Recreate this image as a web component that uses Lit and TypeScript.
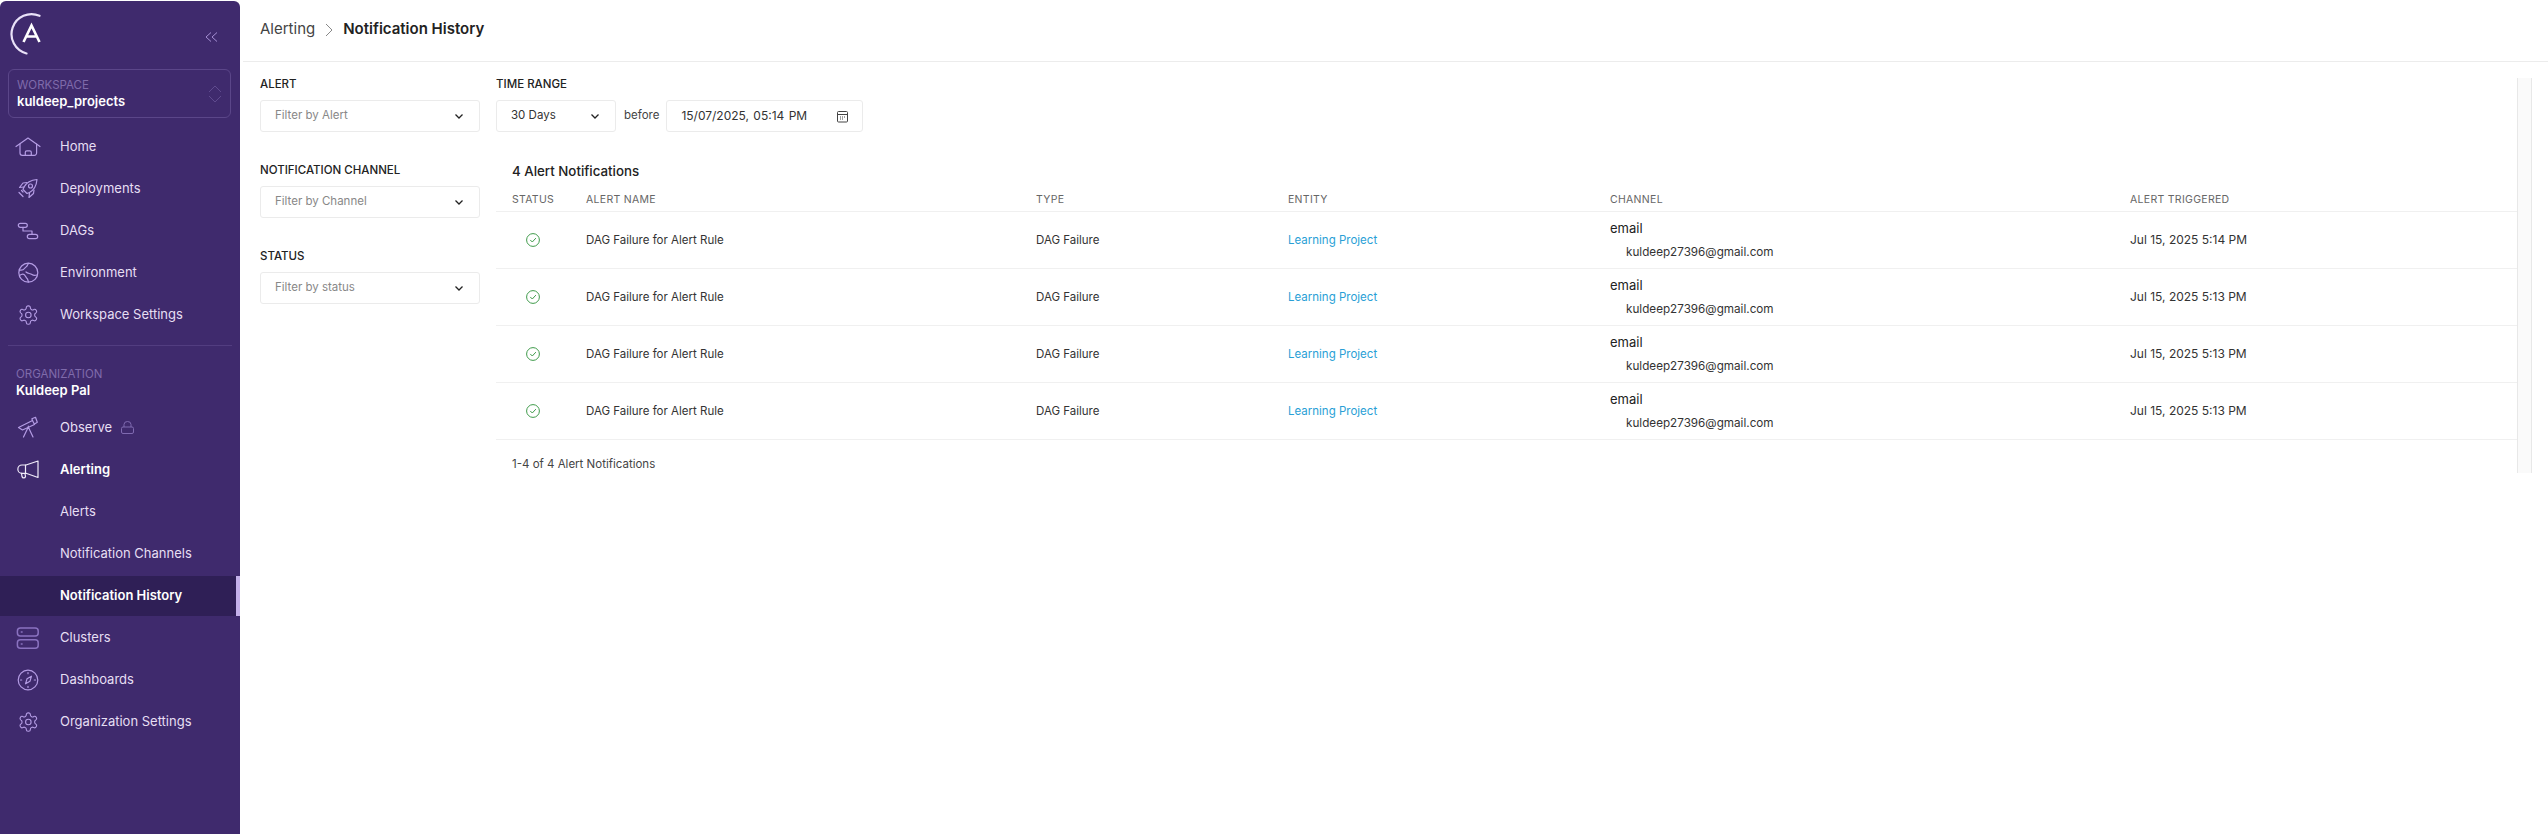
import { LitElement, css, html, svg } from "lit";
import { customElement } from "lit/decorators.js";

const GEAR = svg`
  <g transform="translate(3.3 4) scale(.92)">
    <path d="M12.22 2h-.44a2 2 0 0 0-2 2v.18a2 2 0 0 1-1 1.73l-.43.25a2 2 0 0 1-2 0l-.15-.08a2 2 0 0 0-2.73.73l-.22.38a2 2 0 0 0 .73 2.73l.15.1a2 2 0 0 1 1 1.72v.51a2 2 0 0 1-1 1.74l-.15.09a2 2 0 0 0-.73 2.73l.22.38a2 2 0 0 0 2.73.73l.15-.08a2 2 0 0 1 2 0l.43.25a2 2 0 0 1 1 1.73V20a2 2 0 0 0 2 2h.44a2 2 0 0 0 2-2v-.18a2 2 0 0 1 1-1.73l.43-.25a2 2 0 0 1 2 0l.15.08a2 2 0 0 0 2.73-.73l.22-.39a2 2 0 0 0-.73-2.73l-.15-.08a2 2 0 0 1-1-1.74v-.5a2 2 0 0 1 1-1.74l.15-.09a2 2 0 0 0 .73-2.73l-.22-.38a2 2 0 0 0-2.73-.73l-.15.08a2 2 0 0 1-2 0l-.43-.25a2 2 0 0 1-1-1.73V4a2 2 0 0 0-2-2z"/>
    <circle cx="12" cy="12" r="3"/>
  </g>`;

const ICONS: Record<string, unknown> = {
  home: svg`
    <path d="M2 14.5 14 6l12 8.5"/>
    <path d="M6 12v9a2.3 2.3 0 0 0 2.3 2.3h12a2.3 2.3 0 0 0 2.3-2.3v-9"/>
    <path d="M11.3 23.3v-3a1.5 1.5 0 0 1 1.5-1.5h3a1.5 1.5 0 0 1 1.5 1.5v3"/>`,
  rocket: svg`
    <path d="M23 5.5C17 6 12.5 8.5 10 13l-1 2.5 4 4 2.5-1c4.500-2.500 7-7 7.500-13z"/>
    <circle cx="16.500" cy="12" r="2"/>
    <path d="M10 13l-4.500.5 3.500-4.500 4-.5"/>
    <path d="M15.500 18.500l-.5 5 4.500-4 .5-3.500"/>
    <path d="M5 18.500l4 4M7.500 16.500l1.500 1.500"/>`,
  dags: svg`
    <rect x="4.300" y="7.300" width="9" height="4" rx="2"/>
    <rect x="13.300" y="18.300" width="10.400" height="4.400" rx="2.200"/>
    <path d="M9 11.300V15h9v3.300"/>`,
  globe: svg`
    <circle cx="14.300" cy="14.700" r="9.500"/>
    <path d="M5.200 12c2.300.5 4.300 0 5.300-1.500 1-1.400 2.500-1.800 3-3.500l1-1.500"/>
    <path d="M5.500 17.500c1.800-1.300 3.200-2 4.500-1 1.500 1.200 2 3 3.500 4.500l1 3"/>
    <path d="M12 14c2 2 4 1 6 2.500 1.500 1.200 3 1 5 .5"/>`,
  gear: GEAR,
  telescope: svg`
    <path d="M4.500 14.500 18.500 7.500l2 4-12 5.500z"/>
    <path d="M18.500 7.500l-.6-1.700 3.600-1.500 1.800 5-2.800 1.700"/>
    <path d="M14.300 14v-1M14.300 14 9.500 24M14.300 14 19 24"/>`,
  megaphone: svg`
    <path d="M24 6v16.500L12 18.300H8A4.150 4.150 0 0 1 8 10h4z"/>
    <path d="M11.500 10v8.300"/>
    <path d="M7.500 18.300l.5 3.200a1.800 1.800 0 0 0 3.500 0l-.5-3"/>`,
  clusters: svg`
    <rect x="3.400" y="5" width="20.800" height="8" rx="3"/>
    <rect x="3.400" y="16.800" width="20.800" height="8.400" rx="3"/>
    <path d="M7.300 9h.8M7.300 21h.8"/>`,
  compass: svg`
    <circle cx="14" cy="15" r="9.800"/>
    <path d="M17.500 11.200l-1.500 5-4.500 2.600 1.500-5z"/>
    <path d="M14 7.500v1.200M14 21.300v1.200M6.500 15h1.200M20.300 15h1.200"/>`,
};

const CHEVRON = html`<svg class="chev" viewBox="0 0 12 12"><path d="M2.500 4.500 6 8l3.500-3.500"/></svg>`;

const CHECK = html`<svg class="check" viewBox="0 0 14 14">
  <circle cx="7" cy="7" r="6.400"/><path d="M4.500 7.200 6.300 9l3.300-3.600"/>
</svg>`;

interface NavItem {
  label: string;
  icon?: string;
  bold?: boolean;
  active?: boolean;
  locked?: boolean;
}

const WORKSPACE_NAV: NavItem[] = [
  { label: "Home", icon: "home" },
  { label: "Deployments", icon: "rocket" },
  { label: "DAGs", icon: "dags" },
  { label: "Environment", icon: "globe" },
  { label: "Workspace Settings", icon: "gear" },
];

const ORG_NAV: NavItem[] = [
  { label: "Observe", icon: "telescope", locked: true },
  { label: "Alerting", icon: "megaphone", bold: true },
  { label: "Alerts" },
  { label: "Notification Channels" },
  { label: "Notification History", active: true },
  { label: "Clusters", icon: "clusters" },
  { label: "Dashboards", icon: "compass" },
  { label: "Organization Settings", icon: "gear" },
];

const ROWS = ["Jul 15, 2025 5:14 PM", "Jul 15, 2025 5:13 PM", "Jul 15, 2025 5:13 PM", "Jul 15, 2025 5:13 PM"];

@customElement("app-root")
export class AppRoot extends LitElement {
  static styles = css`
    :host {
      display: flex;
      width: 2548px;
      height: 834px;
      overflow: hidden;
      background: #fff;
      font-family: Inter, "Liberation Sans", sans-serif;
      color: #2b2b2b;
    }
    * { box-sizing: border-box; }

    /* sidebar */
    .sidebar {
      width: 240px;
      flex: none;
      margin-top: 1px;
      background: #3f2a6d;
      border-radius: 6px 6px 0 0;
      color: #e6dff3;
      font-size: 13px;
    }
    .brand {
      height: 68px;
      display: flex;
      justify-content: space-between;
      padding: 11px 22px 0 9px;
    }
    .logo { width: 34px; height: 44px; }
    .collapse { width: 13px; height: 12px; margin-top: 19px; fill: none; stroke: #a58fd4; stroke-width: 1; }
    .workspace {
      height: 49px;
      margin: 0 9px 7px 8px;
      padding: 8px 8px 0 8px;
      border: 1px solid #5b4689;
      border-radius: 6px;
      display: flex;
      justify-content: space-between;
    }
    .caption { font-size: 11.5px; line-height: 15px; color: #7f6bab; }
    .value { font-size: 13px; line-height: 16px; font-weight: 600; color: #fff; }
    .updown { width: 14px; height: 18px; margin-top: 7px; fill: none; stroke: #5f4a8e; stroke-width: 1; }
    .divider { height: 1px; margin: 10px 8px 0; background: #523d80; }
    .org { padding: 21px 16px 0; height: 60px; }
    .item {
      display: flex;
      align-items: center;
      height: 42px;
      padding-left: 14px;
      line-height: 20px;
      white-space: nowrap;
    }
    .icon { width: 28px; height: 28px; flex: none; margin-right: 18px; fill: none; stroke: #b49ce4; stroke-width: 1.200; stroke-linecap: round; stroke-linejoin: round; }
    .icon.dim { stroke: #8a72c0; stroke-width: 1.500; }
    .icon.bright { stroke: #f1ecfa; }
    .noicon { width: 28px; flex: none; margin-right: 18px; }
    .bold { font-weight: 600; color: #fff; }
    .active {
      height: 40px;
      margin-top: 2px;
      padding-bottom: 2px;
      background: #2f1f56;
      border-right: 4px solid #c4b0ea;
      font-weight: 600;
      color: #fff;
    }
    .lock { width: 13px; height: 13px; margin-left: 9px; fill: none; stroke: #7f6ab0; stroke-width: 1; }

    /* main */
    .main { flex: 1; min-width: 0; padding-left: 3px; }
    .crumbs {
      height: 62px;
      border-bottom: 1px solid #ececec;
      display: flex;
      align-items: center;
      padding: 0 0 4px 17px;
      font-size: 15px;
      color: #444;
    }
    .crumbs b { font-weight: 600; color: #222; }
    .crumbs svg { width: 10px; height: 14px; margin: 3px 9px 0 9px; fill: none; stroke: #888; stroke-width: 1; }
    .body { display: flex; padding: 14px 0 0 17px; }
    .filters { width: 220px; flex: none; margin-right: 16px; display: flex; flex-direction: column; gap: 30px; }
    .label { font-size: 11.5px; line-height: 16px; font-weight: 500; color: #222; margin-bottom: 8px; }
    .select {
      height: 32px;
      border: 1px solid #ebebeb;
      border-radius: 3px;
      display: flex;
      align-items: center;
      justify-content: space-between;
      padding: 0 14px 2px 14px;
      font-size: 11.5px;
      color: #888;
    }
    .chev { width: 12px; height: 12px; margin-top: 2px; fill: none; stroke: #222; stroke-width: 1.300; }
    .content { width: 2021px; flex: none; }
    .range { display: flex; align-items: center; font-size: 11.5px; }
    .range .select { color: #333; }
    .days { width: 120px; }
    .before { margin: 0 7px 0 8px; color: #444; padding-bottom: 2px; }
    .date { width: 197px; padding-right: 13px; font-size: 12px; word-spacing: 1px; }
    .cal { width: 13px; height: 13px; margin-top: 2px; fill: none; stroke: #444; stroke-width: 1; }
    .title { margin: 29px 0 6px 16px; font-size: 13.3px; line-height: 20px; font-weight: 500; color: #222; }
    .row {
      display: grid;
      grid-template-columns: 90px 450px 252px 322px 520px 1fr;
      border-bottom: 1px solid #f0f0f0;
      font-size: 11.5px;
      color: #333;
    }
    .head { height: 25px; font-size: 10.5px; letter-spacing: .3px; color: #666; line-height: 26px; }
    .cells { height: 57px; align-items: center; padding-bottom: 1px; }
    .first { padding-left: 16px; }
    .check { display: block; width: 14px; height: 14px; margin: 1px 0 0 14px; fill: none; stroke: #3f9b4b; stroke-width: 1; }
    .check path { stroke-linecap: round; }
    .link { color: #2a9fd6; }
    .when { font-size: 12px; }
    .channel { line-height: 20px; align-self: start; padding-top: 6px; }
    .channel div:first-child { font-size: 13px; color: #222; }
    .channel div:last-child { margin: 4px 0 0 16px; font-size: 11.7px; }
    .footer { margin: 14px 0 0 16px; font-size: 11.5px; line-height: 20px; color: #444; }
    .track {
      width: 15px;
      height: 395px;
      flex: none;
      margin-top: 2px;
      background: #fafafa;
      border-left: 1px solid #e8e8e8;
      border-right: 1px solid #e8e8e8;
    }
  `;

  private _item(item: NavItem) {
    const classes = `item ${item.active ? "active" : ""} ${item.bold ? "bold" : ""}`;
    const tone = item.icon === "clusters" ? "dim" : item.bold ? "bright" : "";
    return html`
      <div class="${classes}">
        ${item.icon
          ? html`<svg class="icon ${tone}" viewBox="0 0 28 28">${ICONS[item.icon]}</svg>`
          : html`<span class="noicon"></span>`}
        ${item.label}
        ${item.locked
          ? html`<svg class="lock" viewBox="0 0 13 13">
              <rect x=".5" y="6" width="12" height="6.500" rx="1.500"/>
              <path d="M3 6V3.500a3.500 3 0 0 1 7 0V6"/>
            </svg>`
          : ""}
      </div>
    `;
  }

  private _filter(label: string, placeholder: string) {
    return html`
      <div>
        <div class="label">${label}</div>
        <div class="select"><span>${placeholder}</span>${CHEVRON}</div>
      </div>
    `;
  }

  private _sidebar() {
    return html`
      <nav class="sidebar">
        <div class="brand">
          <svg class="logo" viewBox="0 0 34 44" fill="none" stroke="#e9e1f8">
            <path d="M30.500 3.800A20 20 0 1 0 17.500 41.500" stroke-width="2.200" stroke-linecap="round"/>
            <path d="M14.500 30 22.500 13.500 30.500 30M17.500 24.500H27.500" stroke="#fff" stroke-width="2.600"/>
          </svg>
          <svg class="collapse" viewBox="0 0 13 12"><path d="M6 1.500 1 6l5 4.500M12 1.500 7 6l5 4.500"/></svg>
        </div>
        <div class="workspace">
          <div>
            <div class="caption">WORKSPACE</div>
            <div class="value">kuldeep_projects</div>
          </div>
          <svg class="updown" viewBox="0 0 14 18"><path d="M1 7 7 1l6 6M1 11l6 6 6-6"/></svg>
        </div>
        ${WORKSPACE_NAV.map((item) => this._item(item))}
        <div class="divider"></div>
        <div class="org">
          <div class="caption">ORGANIZATION</div>
          <div class="value">Kuldeep Pal</div>
        </div>
        ${ORG_NAV.map((item) => this._item(item))}
      </nav>
    `;
  }

  render() {
    return html`
      ${this._sidebar()}
      <main class="main">
        <header class="crumbs">
          <span>Alerting</span>
          <svg viewBox="0 0 10 14"><path d="M2 1l6 6-6 6"/></svg>
          <b>Notification History</b>
        </header>
        <div class="body">
          <div class="filters">
            ${this._filter("ALERT", "Filter by Alert")}
            ${this._filter("NOTIFICATION CHANNEL", "Filter by Channel")}
            ${this._filter("STATUS", "Filter by status")}
          </div>
          <div class="content">
            <div class="label">TIME RANGE</div>
            <div class="range">
              <div class="select days"><span>30 Days</span>${CHEVRON}</div>
              <span class="before">before</span>
              <div class="select date">
                <span>15/07/2025, 05:14 PM</span>
                <svg class="cal" viewBox="0 0 13 13">
                  <rect x="1.500" y="1.500" width="10" height="10.500" rx="1"/>
                  <path d="M1.500 4.500h10M4 7h1M6 7h1M8 7h1M4 9h1M6 9h1"/>
                </svg>
              </div>
            </div>
            <div class="title">4 Alert Notifications</div>
            <div class="row head">
              <span class="first">STATUS</span><span>ALERT NAME</span><span>TYPE</span>
              <span>ENTITY</span><span>CHANNEL</span><span>ALERT TRIGGERED</span>
            </div>
            ${ROWS.map((when) => html`
              <div class="row cells">
                <span class="first">${CHECK}</span>
                <span>DAG Failure for Alert Rule</span>
                <span>DAG Failure</span>
                <span class="link">Learning Project</span>
                <div class="channel"><div>email</div><div>kuldeep27396@gmail.com</div></div>
                <span class="when">${when}</span>
              </div>
            `)}
            <div class="footer">1-4 of 4 Alert Notifications</div>
          </div>
          <div class="track"></div>
        </div>
      </main>
    `;
  }
}
